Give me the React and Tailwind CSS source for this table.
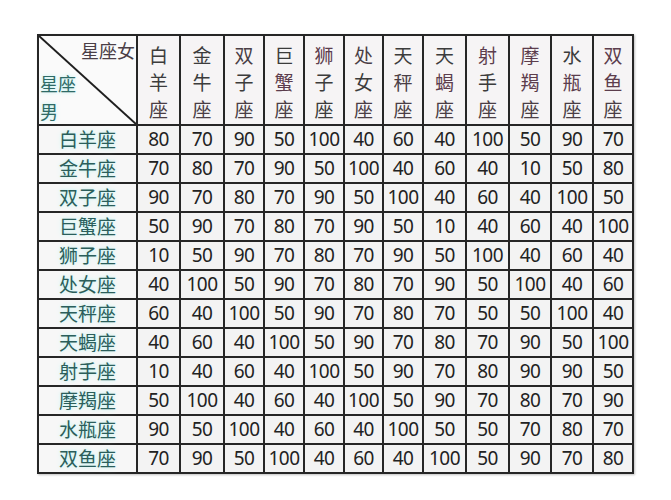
const signs = ['白羊座', '金牛座', '双子座', '巨蟹座', '狮子座', '处女座', '天秤座', '天蝎座', '射手座', '摩羯座', '水瓶座', '双鱼座'];

const scores = [
  [80, 70, 90, 50, 100, 40, 60, 40, 100, 50, 90, 70],
  [70, 80, 70, 90, 50, 100, 40, 60, 40, 10, 50, 80],
  [90, 70, 80, 70, 90, 50, 100, 40, 60, 40, 100, 50],
  [50, 90, 70, 80, 70, 90, 50, 10, 40, 60, 40, 100],
  [10, 50, 90, 70, 80, 70, 90, 50, 100, 40, 60, 40],
  [40, 100, 50, 90, 70, 80, 70, 90, 50, 100, 40, 60],
  [60, 40, 100, 50, 90, 70, 80, 70, 50, 50, 100, 40],
  [40, 60, 40, 100, 50, 90, 70, 80, 70, 90, 50, 100],
  [10, 40, 60, 40, 100, 50, 90, 70, 80, 90, 90, 50],
  [50, 100, 40, 60, 40, 100, 50, 90, 70, 80, 70, 90],
  [90, 50, 100, 40, 60, 40, 100, 50, 50, 70, 80, 70],
  [70, 90, 50, 100, 40, 60, 40, 100, 50, 90, 70, 80],
];

// the scan has a few reddish glyphs in the header
const G = 'text-[#3c3c3c]';
const M = 'text-[#4a3e45]';
const R = 'text-[#5c3d4d]';
const tint = [
  [G, G, M], [G, G, M], [M, G, M], [G, R, M],
  [R, G, G], [M, G, M], [G, M, M], [G, R, M],
  [R, G, M], [R, R, M], [G, R, M], [R, R, M],
];

export default function App() {
  return (
    <div className="w-[671px] h-[500px] bg-white pt-[34px] pl-[37px]">
      <div className="grid w-fit gap-[2px] p-[2px] bg-[#262626] shadow-[1px_1px_2px_rgba(0,0,0,0.25)] grid-cols-[97px_41px_42px_38px_38px_38px_37px_38px_41px_41px_40px_40px_38px] grid-rows-[88px_repeat(12,27px)] font-['Noto_Sans_CJK_SC','Noto_Sans',sans-serif]">
        {/* corner */}
        <div className="relative bg-[#fafafa] overflow-hidden">
          <svg className="absolute inset-0" width="97" height="88" viewBox="0 0 97 88">
            <line x1="0" y1="0" x2="97" y2="88" stroke="#1e1e1e" strokeWidth="2" />
          </svg>
          <span className="absolute right-[1px] top-[3px] text-[18px] leading-[22px] text-[#4a3f47]">星座女</span>
          <span className="absolute left-[1px] top-[36px] text-[18px] leading-[22px] text-[#2f6a66] [text-shadow:0_0_3px_#c8f2f0,0_0_6px_#d8f8f6]">星座</span>
          <span className="absolute left-[1px] top-[64px] text-[18px] leading-[22px] text-[#2f6a66] [text-shadow:0_0_3px_#c8f2f0,0_0_6px_#d8f8f6]">男</span>
        </div>

        {signs.map((s, i) => (
          <div key={s} className="flex flex-col items-center bg-[#f6f4f5] pt-[5px]">
            {s.split('').map((ch, j) => (
              <span key={j} className={`text-[19px] leading-[27px] ${tint[i][j]}`}>
                {ch}
              </span>
            ))}
          </div>
        ))}

        {signs.map((s, r) => (
          <Row key={s} name={s} values={scores[r]} />
        ))}
      </div>
    </div>
  );
}

function Row({ name, values }) {
  return (
    <>
      <div className="flex items-center justify-center bg-[#f7f7f7] text-[19px] text-[#2b5e5b] [text-shadow:0_0_3px_#c8f2f0,0_0_6px_#d8f8f6]">
        {name}
      </div>
      {values.map((v, i) => (
        <div
          key={i}
          className="flex items-center justify-center bg-[#f3f3f3] text-[19px] text-[#222] tracking-[-0.5px] font-['Noto_Sans',sans-serif]"
        >
          {v}
        </div>
      ))}
    </>
  );
}
